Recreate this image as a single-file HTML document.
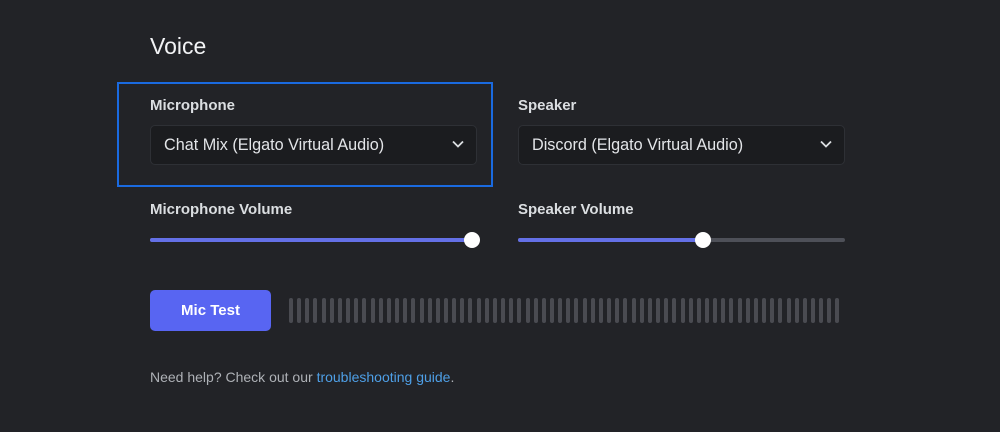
<!DOCTYPE html><html><head><style>
body{margin:0;width:1000px;height:432px;background:#222327;font-family:"Liberation Sans",sans-serif;color:#dbdee1;position:relative;overflow:hidden}
.a{position:absolute}
h1{position:absolute;left:150px;top:33px;margin:0;font-size:23px;font-weight:normal;color:#f2f3f5}
.lbl{font-size:15px;font-weight:bold;color:#dbdee1}
.sel{height:38px;border:1px solid #2e3035;background:#1b1c1f;border-radius:5px;box-sizing:border-box;font-size:16.2px;color:#e3e5e8;line-height:38px;padding-left:13px}
.sel svg{position:absolute;right:12px;top:14px}
.track{height:4px;border-radius:2px;background:#4e5058}
.fill{height:4px;border-radius:2px;background:#6470e6;position:absolute;left:0;top:0}
.knob{width:16px;height:16px;border-radius:50%;background:#fff;position:absolute;top:-6px}
.bars{display:flex;justify-content:space-between;left:289px;top:298px;width:551px;height:25px}
.bars i{width:4px;height:25px;border-radius:2px;background:#4a4b51;display:block}
</style></head><body>
<h1>Voice</h1>
<div class="a" style="left:117px;top:82px;width:376px;height:105px;border:2px solid #1a6ae0;box-sizing:border-box"></div>
<div class="a lbl" style="left:150px;top:97px">Microphone</div>
<div class="a sel" style="left:150px;top:125px;width:327px;height:40px">Chat Mix (Elgato Virtual Audio)<svg width="12" height="8" viewBox="0 0 12 8"><path d="M1 1.5l5 5 5-5" stroke="#dbdee1" stroke-width="1.8" fill="none"/></svg></div>
<div class="a lbl" style="left:518px;top:97px">Speaker</div>
<div class="a sel" style="left:518px;top:125px;width:327px;height:40px">Discord (Elgato Virtual Audio)<svg width="12" height="8" viewBox="0 0 12 8"><path d="M1 1.5l5 5 5-5" stroke="#dbdee1" stroke-width="1.8" fill="none"/></svg></div>
<div class="a lbl" style="left:150px;top:201px">Microphone Volume</div>
<div class="a lbl" style="left:518px;top:201px">Speaker Volume</div>
<div class="a track" style="left:150px;top:238px;width:327px"><div class="fill" style="width:322px"></div><div class="knob" style="left:314px"></div></div>
<div class="a track" style="left:518px;top:238px;width:327px"><div class="fill" style="width:185px"></div><div class="knob" style="left:177px"></div></div>
<div class="a" style="left:150px;top:290px;width:121px;height:41px;background:#5865f2;border-radius:5px;color:#fff;font-size:15px;font-weight:bold;text-align:center;line-height:41px">Mic Test</div>
<div class="a bars"><i></i><i></i><i></i><i></i><i></i><i></i><i></i><i></i><i></i><i></i><i></i><i></i><i></i><i></i><i></i><i></i><i></i><i></i><i></i><i></i><i></i><i></i><i></i><i></i><i></i><i></i><i></i><i></i><i></i><i></i><i></i><i></i><i></i><i></i><i></i><i></i><i></i><i></i><i></i><i></i><i></i><i></i><i></i><i></i><i></i><i></i><i></i><i></i><i></i><i></i><i></i><i></i><i></i><i></i><i></i><i></i><i></i><i></i><i></i><i></i><i></i><i></i><i></i><i></i><i></i><i></i><i></i><i></i></div>
<div class="a" style="left:150px;top:369px;font-size:14px;color:#aeb1b6">Need help? Check out our <span style="color:#4e9fe6">troubleshooting guide</span>.</div>
</body></html>
